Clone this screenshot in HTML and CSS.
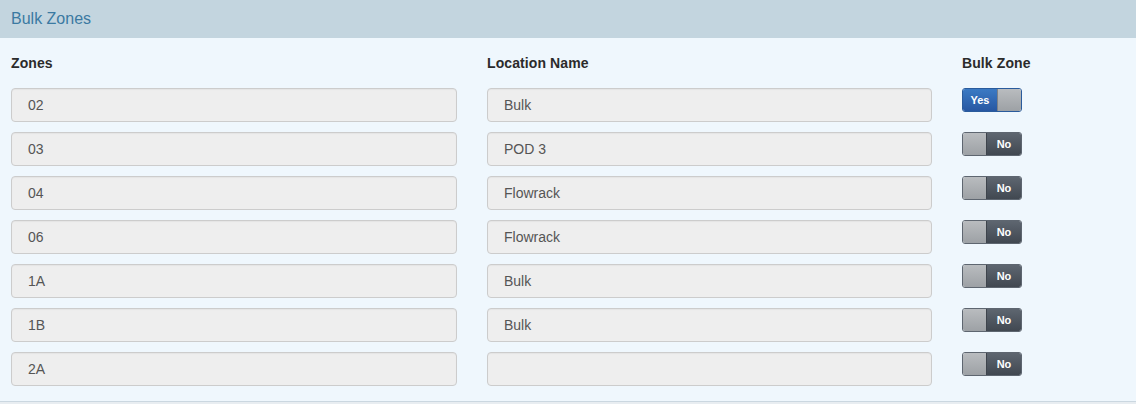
FILE: index.html
```html
<!DOCTYPE html>
<html>
<head>
<meta charset="utf-8">
<link rel="stylesheet" href="styles.css">
</head>
<body>
<div class="panel">
  <div class="panel-heading">Bulk Zones</div>
  <div class="panel-body">
    <div class="grid">
      <div class="label">Zones</div>
      <div class="label">Location Name</div>
      <div class="label">Bulk Zone</div>

      <div class="field">02</div>
      <div class="field">Bulk</div>
      <div class="cell"><div class="toggle on"><span class="yes">Yes</span><span class="knob"></span></div></div>

      <div class="field">03</div>
      <div class="field">POD 3</div>
      <div class="cell"><div class="toggle off"><span class="knob"></span><span class="no">No</span></div></div>

      <div class="field">04</div>
      <div class="field">Flowrack</div>
      <div class="cell"><div class="toggle off"><span class="knob"></span><span class="no">No</span></div></div>

      <div class="field">06</div>
      <div class="field">Flowrack</div>
      <div class="cell"><div class="toggle off"><span class="knob"></span><span class="no">No</span></div></div>

      <div class="field">1A</div>
      <div class="field">Bulk</div>
      <div class="cell"><div class="toggle off"><span class="knob"></span><span class="no">No</span></div></div>

      <div class="field">1B</div>
      <div class="field">Bulk</div>
      <div class="cell"><div class="toggle off"><span class="knob"></span><span class="no">No</span></div></div>

      <div class="field">2A</div>
      <div class="field"></div>
      <div class="cell"><div class="toggle off"><span class="knob"></span><span class="no">No</span></div></div>
    </div>
  </div>
</div>
</body>
</html>
```
FILE: styles.css
```css
html, body {
  margin: 0;
  padding: 0;
  background: #e8edf1;
  font-family: "Liberation Sans", Arial, sans-serif;
}
.panel {
  background: #eff7fd;
  border-bottom: 1px solid #cbd7e0;
}
.panel-heading {
  height: 38px;
  line-height: 38px;
  background: #c3d5df;
  color: #3b7aa2;
  font-size: 16px;
  padding-left: 11px;
}
.panel-body {
  padding: 15px 11px 15px 11px;
}
.grid {
  display: grid;
  grid-template-columns: 446px 445px 1fr;
  column-gap: 30px;
  row-gap: 10px;
}
.label {
  font-size: 14px;
  font-weight: bold;
  color: #2b2b2b;
  line-height: 20px;
  margin-bottom: 5px;
  letter-spacing: 0.1px;
}
.field {
  box-sizing: border-box;
  height: 34px;
  line-height: 32px;
  background: #eeeeee;
  border: 1px solid #cccccc;
  border-radius: 4px;
  padding-left: 16px;
  font-size: 14px;
  color: #555555;
  box-shadow: inset 0 1px 1px rgba(0,0,0,0.04);
}
.cell {
  height: 34px;
}
.toggle {
  display: flex;
  width: 60px;
  height: 24px;
  box-sizing: border-box;
  border: 1px solid #5e6670;
  border-radius: 3px;
  overflow: hidden;
  font-size: 11px;
  font-weight: bold;
  color: #ffffff;
}
.toggle.on {
  border-color: #2a5b9c;
}
.toggle .knob {
  width: 23px;
  background: linear-gradient(#b9bcbf, #9da1a5);
  border-left: 1px solid #7c8187;
}
.toggle.off .knob {
  border-left: none;
  border-right: 1px solid #3e444c;
}
.toggle .yes {
  flex: 1;
  background: linear-gradient(#3b7ac4, #2757a2);
  text-align: center;
  line-height: 22px;
}
.toggle .no {
  flex: 1;
  background: linear-gradient(#5e6670, #414851);
  text-align: center;
  line-height: 22px;
}
```
